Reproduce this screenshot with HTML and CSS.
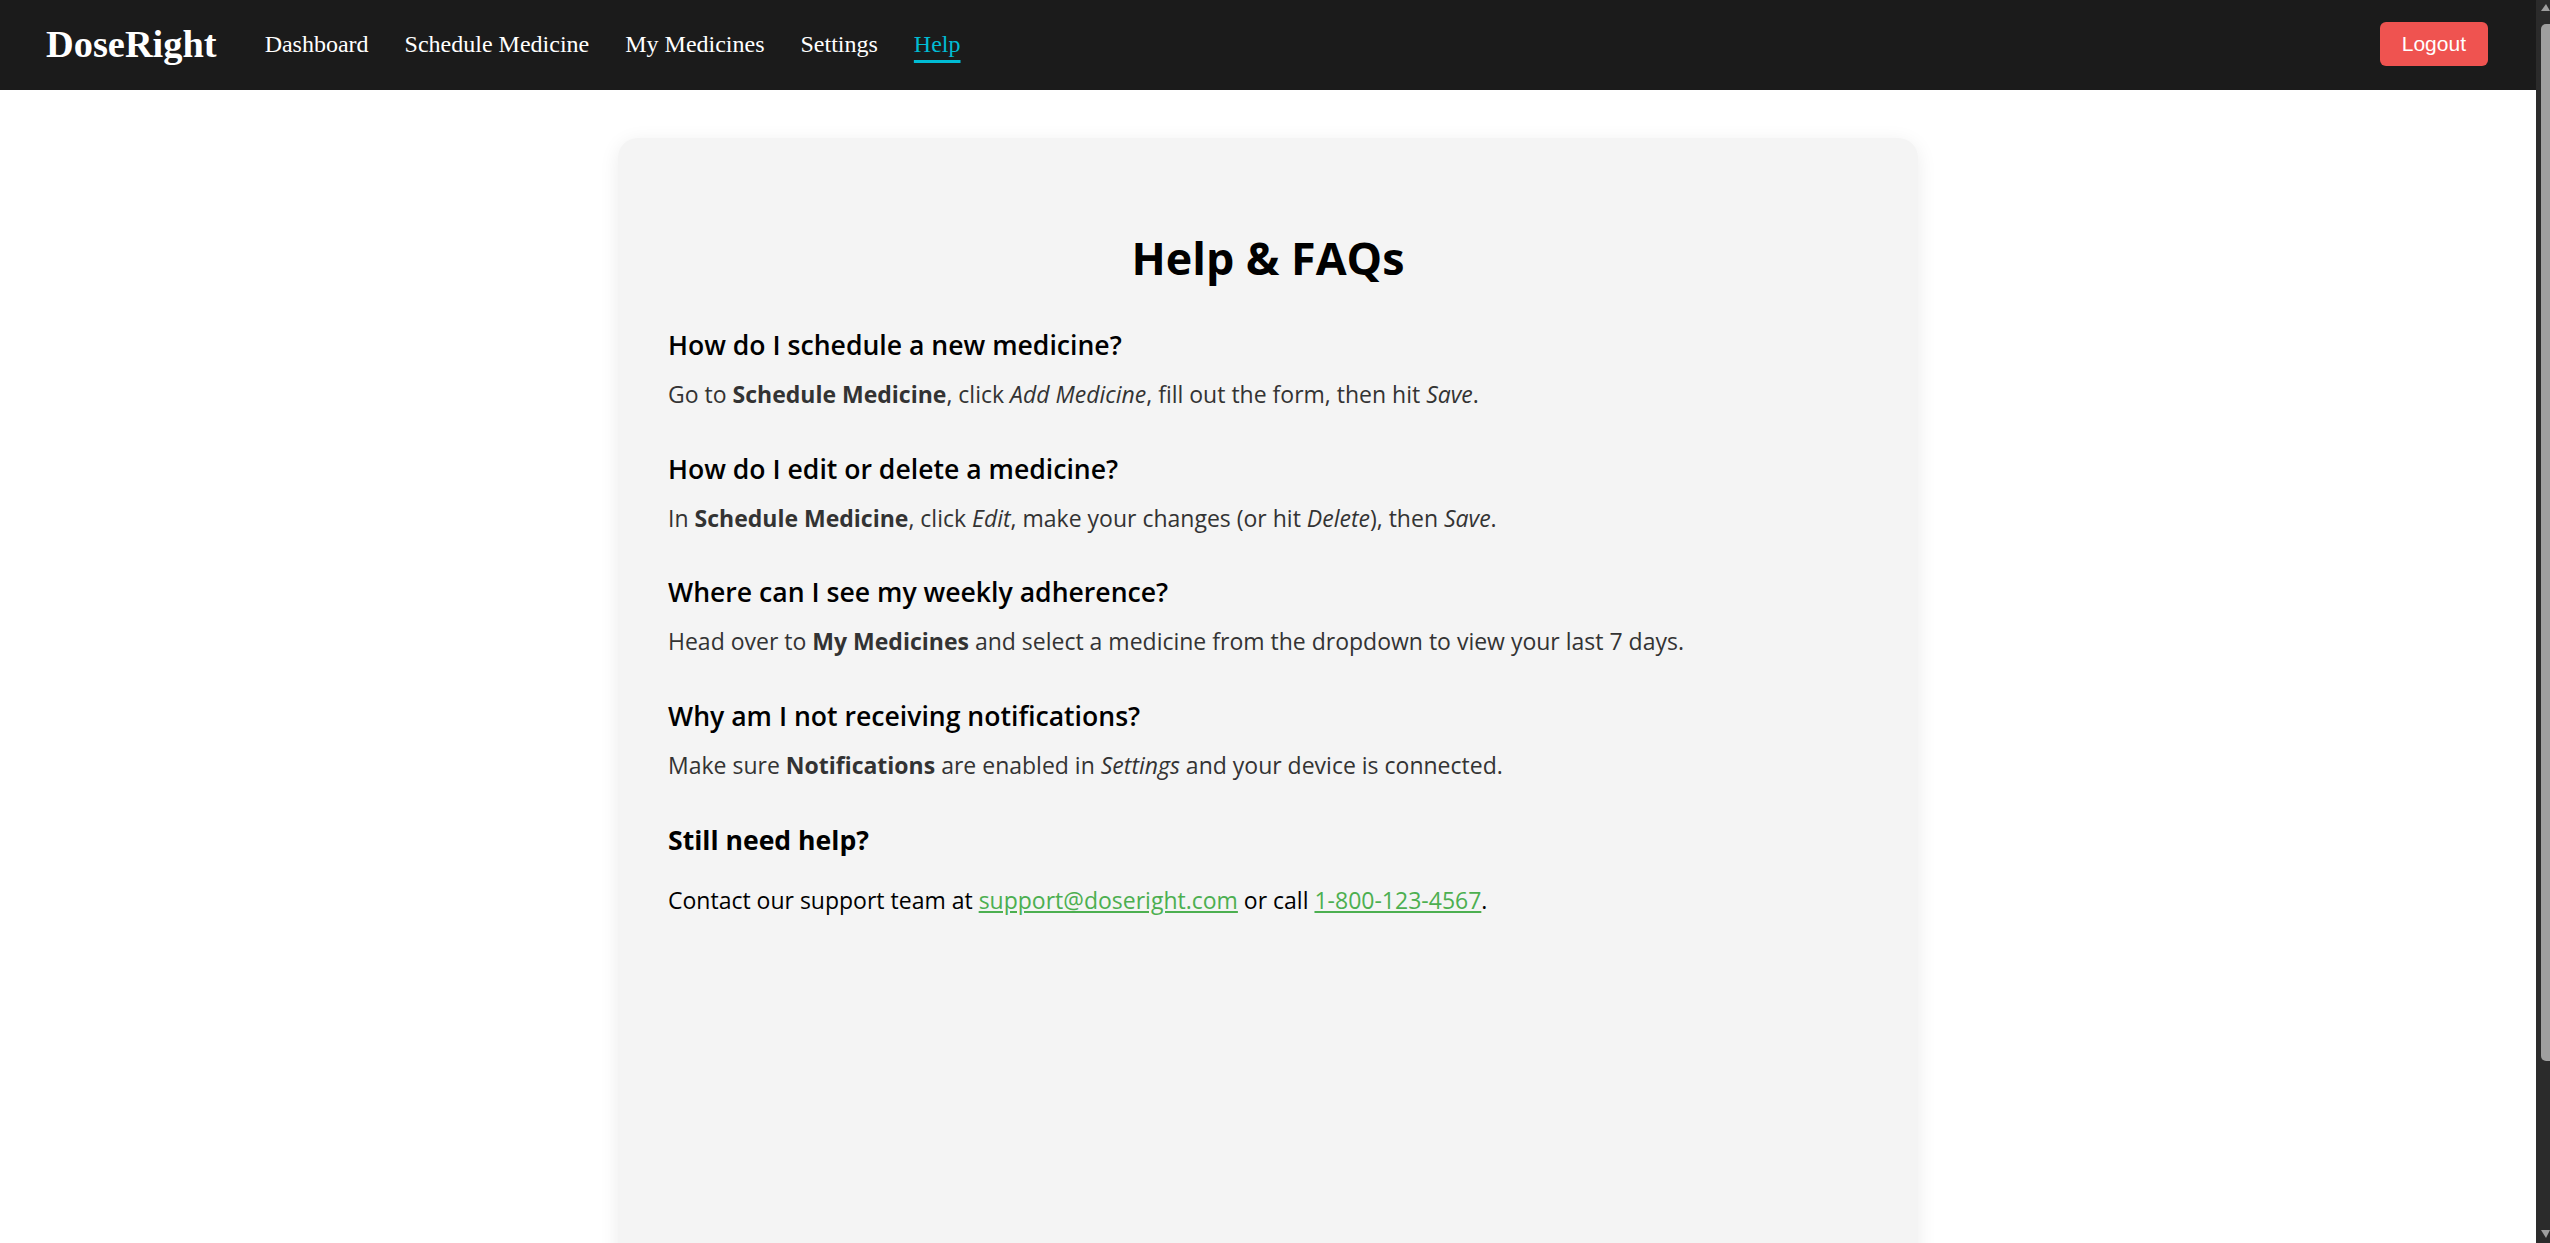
FILE: index.html
```html
<!DOCTYPE html>
<html lang="en">
<head>
<meta charset="utf-8">
<title>DoseRight - Help</title>
<link rel="stylesheet" href="styles.css">
</head>
<body>
<div class="window">
  <div class="app">
    <header class="navbar">
      <div class="brand">DoseRight</div>
      <nav class="nav-links">
        <a href="#" class="nav-link">Dashboard</a>
        <a href="#" class="nav-link">Schedule Medicine</a>
        <a href="#" class="nav-link">My Medicines</a>
        <a href="#" class="nav-link">Settings</a>
        <a href="#" class="nav-link active">Help</a>
      </nav>
      <button class="logout">Logout</button>
    </header>
    <main class="page">
      <section class="card">
        <h1 class="title">Help &amp; FAQs</h1>
        <div class="faq">
          <h3 class="question">How do I schedule a new medicine?</h3>
          <p class="answer">Go to <strong>Schedule Medicine</strong>, click <em>Add Medicine</em>, fill out the form, then hit <em>Save</em>.</p>
        </div>
        <div class="faq">
          <h3 class="question">How do I edit or delete a medicine?</h3>
          <p class="answer">In <strong>Schedule Medicine</strong>, click <em>Edit</em>, make your changes (or hit <em>Delete</em>), then <em>Save</em>.</p>
        </div>
        <div class="faq">
          <h3 class="question">Where can I see my weekly adherence?</h3>
          <p class="answer">Head over to <strong>My Medicines</strong> and select a medicine from the dropdown to view your last 7 days.</p>
        </div>
        <div class="faq">
          <h3 class="question">Why am I not receiving notifications?</h3>
          <p class="answer">Make sure <strong>Notifications</strong> are enabled in <em>Settings</em> and your device is connected.</p>
        </div>
        <div class="contact">
          <h3 class="contact-title">Still need help?</h3>
          <p class="contact-text">Contact our support team at <a href="#" class="green-link">support@doseright.com</a> or call <a href="#" class="green-link">1-800-123-4567</a>.</p>
        </div>
      </section>
    </main>
  </div>
  <div class="scrollbar" aria-hidden="true">
    <div class="sb-arrow-up"></div>
    <div class="sb-thumb"></div>
    <div class="sb-arrow-down"></div>
  </div>
</div>
</body>
</html>
```

FILE: styles.css
```css
body {
  margin: 0;
  background: #ffffff;
  font-family: "Open Sans", "Noto Sans", sans-serif;
}
.window {
  display: flex;
  align-items: flex-start;
}
.app {
  flex: 1;
  min-width: 0;
}
.scrollbar {
  position: sticky;
  top: 0;
  width: 14px;
  height: 100vh;
  flex: none;
  background: #2b2b2b;
  display: flex;
  flex-direction: column;
  align-items: flex-end;
}
.sb-arrow-up {
  margin-top: 4px;
  width: 0;
  height: 0;
  border-left: 5px solid transparent;
  border-right: 4px solid transparent;
  border-bottom: 7px solid #9f9f9f;
}
.sb-thumb {
  margin-top: 13px;
  width: 9px;
  height: 1037px;
  background: #9f9f9f;
  border-radius: 5px 0 0 5px;
}
.sb-arrow-down {
  margin-top: auto;
  margin-bottom: 5px;
  width: 0;
  height: 0;
  border-left: 5px solid transparent;
  border-right: 4px solid transparent;
  border-top: 8px solid #9f9f9f;
}
.navbar {
  height: 90px;
  box-sizing: border-box;
  padding: 0 48px 2px 46px;
  background: #1b1b1b;
  display: flex;
  align-items: center;
}
.brand {
  font-family: "Liberation Serif", "Times New Roman", serif;
  font-weight: 700;
  font-size: 38.4px;
  color: #ffffff;
}
.nav-links {
  display: flex;
  align-items: center;
  gap: 36px;
  margin-left: 48px;
}
.nav-link {
  font-family: "Liberation Serif", "Times New Roman", serif;
  font-size: 24px;
  color: #ffffff;
  text-decoration: none;
}
.nav-link.active {
  color: #00bcd4;
  text-decoration: underline;
  text-decoration-thickness: 3px;
  text-underline-offset: 8px;
  text-decoration-skip-ink: none;
}
.logout {
  margin-left: auto;
  background: #ef5350;
  color: #ffffff;
  border: none;
  border-radius: 6px;
  font-family: "Liberation Sans", Arial, sans-serif;
  font-size: 21px;
  padding: 10px 22px;
  line-height: 24px;
}
.page {
  padding: 48px 0;
}
.card {
  width: 1300px;
  min-height: 1264px;
  box-sizing: border-box;
  margin: 0 auto;
  padding: 48px 50px;
  background: #f4f4f4;
  border-radius: 20px;
  box-shadow: 0 4px 20px rgba(0, 0, 0, 0.08);
}
.title {
  margin: 40px 0 37px;
  text-align: center;
  font-size: 44.8px;
  line-height: 64px;
  font-weight: 700;
  color: #000;
}
.question, .contact-title {
  margin: 0 0 15px;
  font-size: 26.6px;
  line-height: 36px;
  font-weight: 600;
  color: #000;
}
.contact-title {
  font-weight: 700;
  margin-bottom: 26px;
}
.answer, .contact-text {
  margin: 0;
  font-size: 23px;
  line-height: 32px;
  color: #333;
}
.contact-text {
  color: #000;
}
.answer strong {
  font-weight: 700;
}
.faq + .faq {
  margin-top: 40.6px;
}
.faq + .contact {
  margin-top: 41.2px;
}
.green-link {
  color: #4caf50;
  text-decoration: underline;
}
```
